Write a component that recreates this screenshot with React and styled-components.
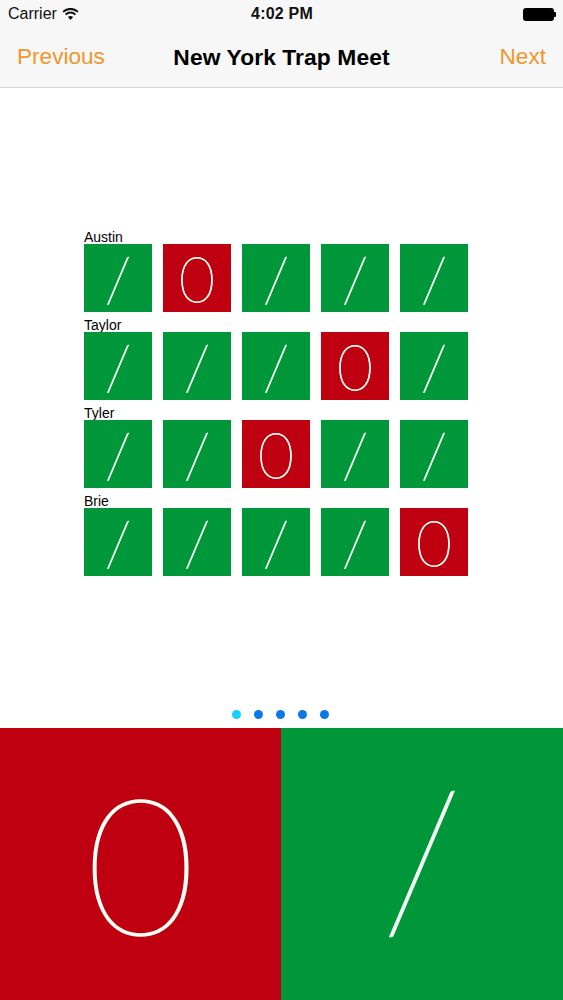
import React from "react";
import styled, { createGlobalStyle } from "styled-components";

const GlobalStyle = createGlobalStyle`
  html, body { margin: 0; padding: 0; background: #ffffff; }
  body { font-family: "Liberation Sans", Arial, sans-serif; }
  * { box-sizing: border-box; }
`;

const RED = "#bf0011";
const GREEN = "#00963a";

const Page = styled.div`
  width: 563px;
  height: 1000px;
  display: flex;
  flex-direction: column;
  overflow: hidden;
`;

const Header = styled.header`
  background: #f7f7f7;
  border-bottom: 1px solid #d6d6d6;
  display: flex;
  flex-direction: column;
`;

const StatusBar = styled.div`
  height: 28px;
  display: grid;
  grid-template-columns: 1fr auto 1fr;
  align-items: center;
  padding: 0 7px 0 8px;
  font-size: 16px;
  color: #111;
`;

const Carrier = styled.div`
  display: flex;
  align-items: center;
  gap: 5px;
`;

const Clock = styled.div`
  font-weight: bold;
  letter-spacing: 0.2px;
`;

const BatteryWrap = styled.div`
  justify-self: end;
  display: flex;
  align-items: center;
`;

const BatteryBody = styled.div`
  width: 31px;
  height: 13px;
  background: #000;
  border-radius: 3px;
`;

const BatteryNub = styled.div`
  width: 2px;
  height: 5px;
  background: #000;
  border-radius: 0 1px 1px 0;
`;

const NavBar = styled.nav`
  height: 59px;
  display: grid;
  grid-template-columns: 1fr auto 1fr;
  align-items: center;
  padding: 0 17px 1px 17px;
`;

const NavButton = styled.span`
  color: #f0962a;
  font-size: 22.6px;
  justify-self: ${(p) => (p.$right ? "end" : "start")};
`;

const Title = styled.h1`
  margin: 0;
  font-size: 22.8px;
  font-weight: bold;
  color: #000;
  letter-spacing: 0.1px;
`;

const Content = styled.main`
  flex: 1;
  display: flex;
  flex-direction: column;
  align-items: center;
`;

const Board = styled.div`
  margin-top: 142px;
  display: flex;
  flex-direction: column;
  gap: 6px;
  margin-left: -11px;
`;

const ShooterRow = styled.div`
  display: flex;
  flex-direction: column;
`;

const Name = styled.div`
  font-size: 14px;
  line-height: 14px;
  height: 14px;
  color: #000;
`;

const Cells = styled.div`
  display: flex;
  gap: 11px;
`;

const Cell = styled.div`
  width: 68px;
  height: 68px;
  background: ${(p) => (p.$miss ? RED : GREEN)};
  display: flex;
  align-items: center;
  justify-content: center;
  color: #f4fff4;
  font-family: Lato, Roboto, "Liberation Sans", sans-serif;
  font-weight: 100;
  font-size: 62px;
  line-height: 52px;
  -webkit-text-stroke: 0.9px #f4fff4;
`;

const Pager = styled.div`
  margin-top: auto;
  margin-bottom: 9px;
  display: flex;
  gap: 13px;
  margin-left: -2px;
`;

const Dot = styled.span`
  width: 9px;
  height: 9px;
  border-radius: 50%;
  background: ${(p) => (p.$active ? "#14d2f7" : "#0a78e6")};
`;

const Buttons = styled.div`
  height: 272px;
  display: grid;
  grid-template-columns: 281px 1fr;
`;

const BigButton = styled.button`
  border: 0;
  margin: 0;
  padding: 0 0 ${(p) => p.$lift}px 0;
  background: ${(p) => (p.$miss ? RED : GREEN)};
  color: #f6fff6;
  display: flex;
  align-items: center;
  justify-content: center;
  font-family: Lato, Roboto, "Liberation Sans", sans-serif;
  font-weight: 100;
  font-size: 190px;
  line-height: 1;
  -webkit-text-stroke: 1.6px #f6fff6;
`;

const WifiIcon = () => (
  <svg width="17" height="12" viewBox="0 0 17 12">
    <path d="M8.5 12 L5.9 9.1 A3.8 3.8 0 0 1 11.1 9.1 Z" fill="#111" />
    <path d="M3.6 6.6 A7 7 0 0 1 13.4 6.6" stroke="#111" strokeWidth="2" fill="none" />
    <path d="M1.1 3.9 A10.6 10.6 0 0 1 15.9 3.9" stroke="#111" strokeWidth="2" fill="none" />
  </svg>
);

const shooters = [
  { name: "Austin", shots: [1, 0, 1, 1, 1] },
  { name: "Taylor", shots: [1, 1, 1, 0, 1] },
  { name: "Tyler", shots: [1, 1, 0, 1, 1] },
  { name: "Brie", shots: [1, 1, 1, 1, 0] },
];

export default function App() {
  return (
    <>
      <GlobalStyle />
      <Page>
        <Header>
          <StatusBar>
            <Carrier>
              Carrier <WifiIcon />
            </Carrier>
            <Clock>4:02 PM</Clock>
            <BatteryWrap>
              <BatteryBody />
              <BatteryNub />
            </BatteryWrap>
          </StatusBar>
          <NavBar>
            <NavButton>Previous</NavButton>
            <Title>New York Trap Meet</Title>
            <NavButton $right>Next</NavButton>
          </NavBar>
        </Header>
        <Content>
          <Board>
            {shooters.map((s) => (
              <ShooterRow key={s.name}>
                <Name>{s.name}</Name>
                <Cells>
                  {s.shots.map((hit, i) => (
                    <Cell key={i} $miss={!hit}>
                      {hit ? "/" : "0"}
                    </Cell>
                  ))}
                </Cells>
              </ShooterRow>
            ))}
          </Board>
          <Pager>
            {[0, 1, 2, 3, 4].map((i) => (
              <Dot key={i} $active={i === 0} />
            ))}
          </Pager>
        </Content>
        <Buttons>
          <BigButton $miss $lift={6}>0</BigButton>
          <BigButton $lift={18}>/</BigButton>
        </Buttons>
      </Page>
    </>
  );
}
